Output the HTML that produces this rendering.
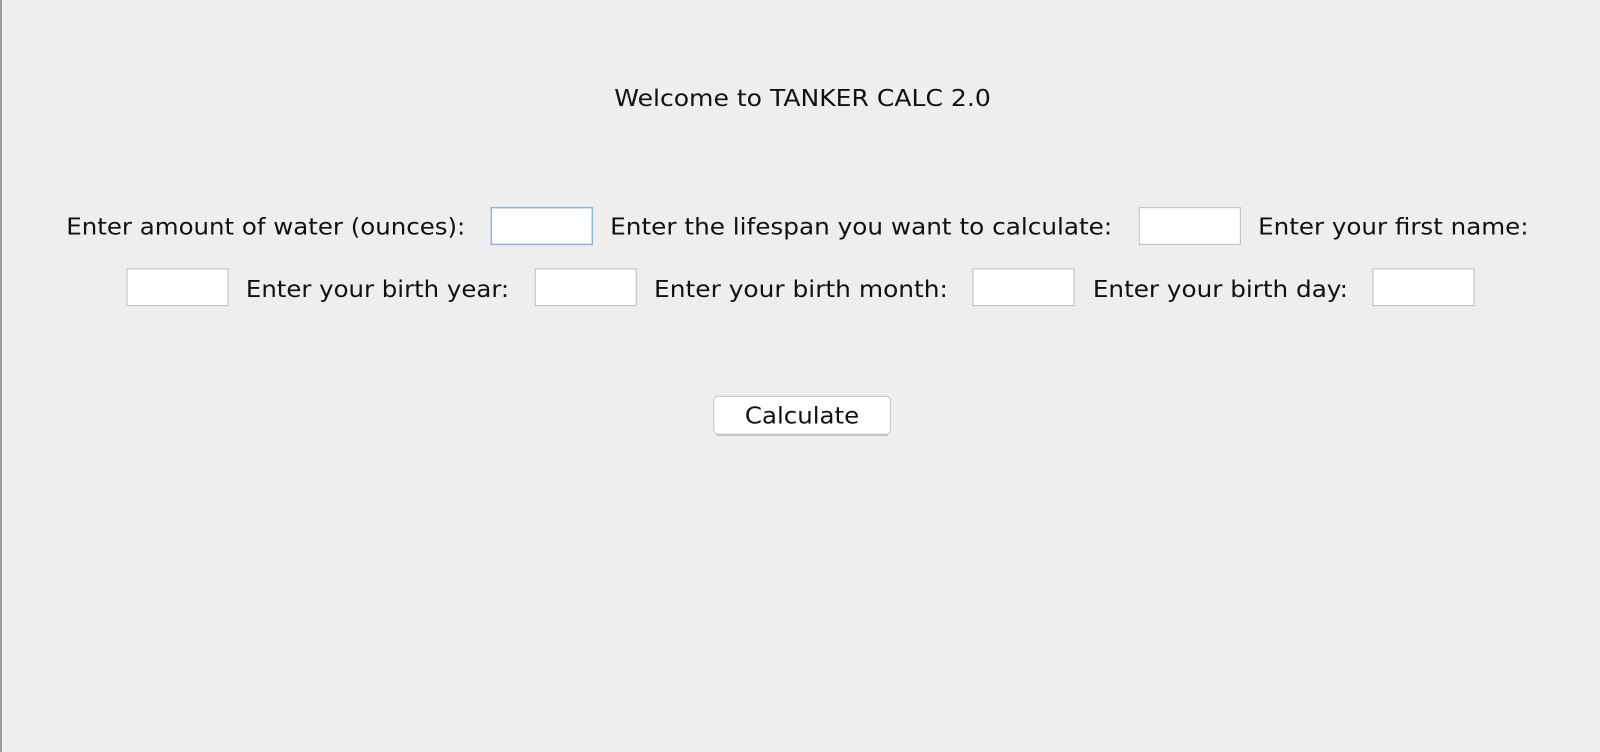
<!DOCTYPE html>
<html><head><meta charset="utf-8"><style>
html,body{margin:0;padding:0;width:1600px;height:752px;overflow:hidden;background:#eeeeee}
svg{display:block}
</style></head><body>
<svg width="1600" height="752" xmlns="http://www.w3.org/2000/svg" font-family="'DejaVu Sans','Liberation Sans',sans-serif" font-size="22.5" fill="#111">
<rect width="1600" height="752" fill="#eeeeee"/>
<rect x="0" y="0" width="2" height="752" fill="#9a9a9a"/>
<g transform="scale(1.0204)">
<text x="602" y="104" textLength="369" lengthAdjust="spacingAndGlyphs">Welcome to TANKER CALC 2.0</text>
<text x="65" y="230" textLength="391" lengthAdjust="spacingAndGlyphs">Enter amount of water (ounces):</text>
<text x="598" y="230" textLength="492" lengthAdjust="spacingAndGlyphs">Enter the lifespan you want to calculate:</text>
<text x="1233" y="230" textLength="265" lengthAdjust="spacingAndGlyphs">Enter your first name:</text>
<text x="241" y="291" textLength="258" lengthAdjust="spacingAndGlyphs">Enter your birth year:</text>
<text x="641" y="291" textLength="288" lengthAdjust="spacingAndGlyphs">Enter your birth month:</text>
<text x="1071" y="291" textLength="250" lengthAdjust="spacingAndGlyphs">Enter your birth day:</text>
<g fill="#fff" stroke="#bdbdbd" stroke-width="1">
<rect x="481.5" y="203.5" width="99" height="36" stroke="#8ab4ec" stroke-width="1.5"/>
<rect x="1116.5" y="203.5" width="99" height="36"/>
<rect x="124.5" y="263.5" width="99" height="36"/>
<rect x="524.5" y="263.5" width="99" height="36"/>
<rect x="953.5" y="263.5" width="99" height="36"/>
<rect x="1345.5" y="263.5" width="99" height="36"/>
</g>
<rect x="699.5" y="388.5" width="173" height="37" rx="4" fill="#fff" stroke="#c4c4c4"/>
<line x1="702" y1="426.5" x2="870" y2="426.5" stroke="#b0b0b0"/>
<text x="730" y="415" textLength="112" lengthAdjust="spacingAndGlyphs">Calculate</text>
</g>
</svg>
</body></html>
